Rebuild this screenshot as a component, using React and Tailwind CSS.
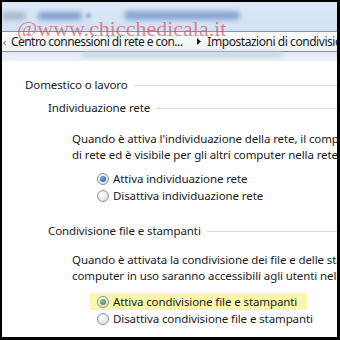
import React from "react";

function Radio({ checked, tone = "blue" }) {
  return (
    <span className="relative flex h-[12px] w-[12px] shrink-0 items-center justify-center rounded-full border border-[#8e9398] bg-[radial-gradient(circle_at_40%_35%,#ffffff,#d4d6d9)]">
      {checked && (
        <span
          className={
            tone === "green"
              ? "h-[6px] w-[6px] rounded-full bg-[radial-gradient(circle_at_40%_35%,#8fc58a,#3c7d3e)]"
              : "h-[6px] w-[6px] rounded-full bg-[radial-gradient(circle_at_40%_35%,#6fb0ec,#1d4f8c)]"
          }
        />
      )}
    </span>
  );
}

function SectionTitle({ children, indent }) {
  return (
    <div className={`flex items-center h-[16px] ${indent}`}>
      <span className="whitespace-nowrap">{children}</span>
      <span className="ml-[6px] h-px flex-1 bg-[#d7dde3]" />
    </div>
  );
}

export default function App() {
  return (
    <div
      className="relative h-[340px] w-[340px] overflow-hidden bg-black pt-[2px] pl-[2px] pr-[3px] pb-[3px]"
      style={{ fontFamily: '"Noto Sans", "Open Sans", sans-serif' }}
    >
      <div className="flex h-full flex-col overflow-hidden bg-white text-[11.5px] tracking-[-0.1px] text-[#1b1b1b]">
        {/* blurred top toolbar */}
        <div className="relative h-[29px] shrink-0 bg-[linear-gradient(#dce8f5,#d3e2f3)]">
          <div className="absolute left-[0px] top-[10px] h-[8px] w-[24px] rounded-full bg-[#a9b6c6] blur-[2.5px]" />
          <div className="absolute left-[36px] top-[10px] h-[8px] w-[44px] rounded-full bg-[#7e9fd0] blur-[2.5px]" />
          <div className="absolute left-[84px] top-[11px] h-[5px] w-[5px] rounded-full bg-[#8aa6cf] blur-[1.5px]" />
          <div className="absolute left-[122px] top-[9px] h-[9px] w-[116px] rounded-full bg-[#86a6d4] blur-[2.5px]" />
        </div>
        {/* breadcrumb */}
        <div className="flex h-[21px] shrink-0 items-center border-y border-[#8391a1] bg-[linear-gradient(#fbfcfd,#eef1f4)] pl-[1px] text-[12px]">
          <span className="text-[10px] leading-none text-[#666]">‹</span>
          <span className="ml-[5px] whitespace-nowrap tracking-[-0.55px]">Centro connessioni di rete e con...</span>
          <svg width="4" height="7" viewBox="0 0 4 7" className="ml-[15px] shrink-0">
            <path d="M0 0 L4 3.5 L0 7 Z" fill="#1b1b1b" />
          </svg>
          <span className="ml-[6px] whitespace-nowrap tracking-[-0.45px]">Impostazioni di condivisione avanzate</span>
        </div>
        <div className="relative h-[9px] shrink-0 bg-[linear-gradient(#dfe8f2,#edf2f7)]">
          <div className="absolute left-[80px] top-[0px] h-[5px] w-[200px] rounded-full bg-[#c9d6e4] blur-[2px]" />
        </div>

        {/* content */}
        <div className="flex flex-col leading-[16px]">
          <div className="mt-[16px]">
            <SectionTitle indent="pl-[23px]">Domestico o lavoro</SectionTitle>
          </div>
          <div className="mt-[7px]">
            <SectionTitle indent="pl-[46px]">Individuazione rete</SectionTitle>
          </div>
          <div className="mt-[15px] whitespace-nowrap pl-[70px]">
            <div>Quando è attiva l'individuazione della rete, il computer può vedere gli altri computer</div>
            <div>di rete ed è visibile per gli altri computer nella rete.</div>
          </div>
          <div className="mt-[7px] flex flex-col pl-[95px]">
            <label className="flex h-[17px] items-center gap-[4px] whitespace-nowrap">
              <Radio checked />
              <span>Attiva individuazione rete</span>
            </label>
            <label className="flex h-[17px] items-center gap-[4px] whitespace-nowrap">
              <Radio />
              <span>Disattiva individuazione rete</span>
            </label>
          </div>
          <div className="mt-[19px]">
            <SectionTitle indent="pl-[46px]">Condivisione file e stampanti</SectionTitle>
          </div>
          <div className="mt-[13px] whitespace-nowrap pl-[70px]">
            <div>Quando è attivata la condivisione dei file e delle stampanti, i file e le stampanti</div>
            <div>computer in uso saranno accessibili agli utenti nella rete.</div>
          </div>
          <div className="mt-[9px] flex flex-col pl-[88px]">
            <label className="flex h-[17px] w-[217px] items-center gap-[4px] whitespace-nowrap bg-[#fbf6ae] pl-[7px]">
              <Radio checked tone="green" />
              <span>Attiva condivisione file e stampanti</span>
            </label>
            <label className="flex h-[17px] items-center gap-[4px] whitespace-nowrap pl-[7px]">
              <Radio />
              <span>Disattiva condivisione file e stampanti</span>
            </label>
          </div>
        </div>
      </div>

      {/* watermark */}
      <div
        className="pointer-events-none absolute left-[17px] top-[17px] text-[22px] leading-[24px] text-[#e0505f]/70"
        style={{ fontFamily: '"Liberation Serif", serif' }}
      >
        @www.chicchedicala.it
      </div>
    </div>
  );
}
